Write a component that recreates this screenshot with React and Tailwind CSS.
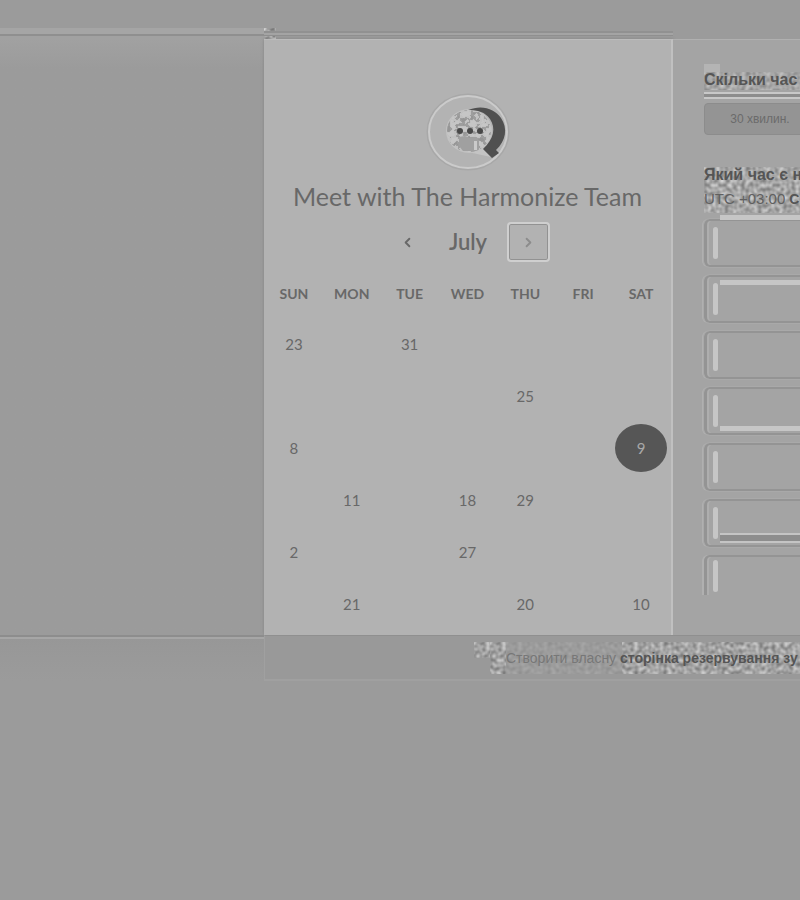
import React from "react";
import { ChevronLeft, ChevronRight } from "lucide-react";

const days = ["SUN", "MON", "TUE", "WED", "THU", "FRI", "SAT"];
const weeks = [
  ["23", "", "31", "", "", "", ""],
  ["", "", "", "", "25", "", ""],
  ["8", "", "", "", "", "", "9"],
  ["", "11", "", "18", "29", "", ""],
  ["2", "", "", "27", "", "", ""],
  ["", "21", "", "", "20", "", "10"],
];
const slots = [
  { bar: "top-[-6px] h-[5px] bg-[#c6c6c6]" },
  { bar: "top-[3px] h-[5px] bg-[#c6c6c6]" },
  { bar: "" },
  { bar: "bottom-[2px] h-[5px] bg-[#c6c6c6]" },
  { bar: "" },
  { bar: "bottom-[2px] h-[10px] border-y-2 border-[#c4c4c4] bg-[#8d8d8d]" },
  { bar: "", last: true },
];

function Grain({ id, className }) {
  return (
    <svg aria-hidden="true" className={"absolute -z-10 " + className}>
      <filter id={id} x="0" y="0" width="100%" height="100%" colorInterpolationFilters="sRGB">
        <feTurbulence type="fractalNoise" baseFrequency="0.24" numOctaves="1" seed="4" />
        <feColorMatrix values="0.8 0 0 0 0.26  0.8 0 0 0 0.26  0.8 0 0 0 0.26  0 0 0 0 1" />
      </filter>
      <rect width="100%" height="100%" filter={"url(#" + id + ")"} />
    </svg>
  );
}

function Logo() {
  return (
    <svg aria-hidden="true" className="h-20 w-[84px]" viewBox="0 0 84 80">
      <defs>
        <filter id="speckle" x="0" y="0" width="100%" height="100%" colorInterpolationFilters="sRGB">
          <feTurbulence type="fractalNoise" baseFrequency="0.2" numOctaves="2" seed="8" />
          <feColorMatrix values="2 0 0 0 -0.4  2 0 0 0 -0.4  2 0 0 0 -0.4  0 0 0 0 1" />
          <feComponentTransfer>
            <feFuncR type="discrete" tableValues="0.59 0.62 0.76 0.78" />
            <feFuncG type="discrete" tableValues="0.59 0.62 0.76 0.78" />
            <feFuncB type="discrete" tableValues="0.59 0.62 0.76 0.78" />
          </feComponentTransfer>
        </filter>
        <clipPath id="bubble"><ellipse cx="43" cy="39" rx="22" ry="21" /></clipPath>
      </defs>
      <ellipse cx="42" cy="40" rx="40" ry="37" fill="#b2b2b2" stroke="#a8a8a8" strokeWidth="3" />
      <ellipse cx="42" cy="40" rx="39" ry="36" fill="#b3b3b3" stroke="#cbcbcb" strokeWidth="2" />
      <path d="M42 60l23 5-5-10z" fill="#c4c4c4" />
      <ellipse cx="43" cy="39" rx="23" ry="22" fill="#c2c2c2" />
      <g clipPath="url(#bubble)">
        <rect x="20" y="17" width="46" height="44" filter="url(#speckle)" />
        <path d="M33 45l6-1 5 2 7-1 2 4v10H37l-4-5z" fill="#a0a0a0" />
        <path d="M48 49h3v9h-3z" fill="#cacaca" />
      </g>
      <path d="M42 18c14-6 27-1 33 8 7 10 5 23-5 32l3 3-7 5-9-9c11-10 13-21 7-30-5-7-12-9-22-9z" fill="#505050" />
      <g fill="#484848">
        <circle cx="34" cy="39" r="3" />
        <circle cx="44" cy="39" r="3" />
        <circle cx="54" cy="39" r="3" />
      </g>
    </svg>
  );
}

function Calendar() {
  return (
    <section className="w-[409px] shrink-0 border-r-2 border-t border-r-[#c0c0c0] border-t-[#bcbcbc] bg-[#b2b2b2] px-px pb-[5px] pt-[52px] font-['Lato',sans-serif] text-[#686868] shadow-[0_0_3px_#858585]">
      <div className="flex justify-center"><Logo /></div>
      <h1 className="mt-1 whitespace-nowrap text-center text-[25px] leading-10">Meet with The Harmonize Team</h1>
      <div className="mt-1.5 flex items-center justify-center pl-2">
        <button aria-label="Previous month" className="flex h-10 w-7 items-center justify-center">
          <ChevronLeft size={15} strokeWidth={3} />
        </button>
        <h2 className="ml-4 mr-2 w-[62px] text-center text-[22px] font-semibold leading-10">July</h2>
        <button aria-label="Next month" className="flex h-10 w-[43px] items-center justify-center rounded border-2 border-[#cfcfcf] text-[#8c8c8c] shadow-[inset_0_0_0_1px_#929292]">
          <ChevronRight size={15} strokeWidth={3} />
        </button>
      </div>
      <table className="mt-2 w-full table-fixed border-collapse text-center">
        <thead>
          <tr className="h-12">
            {days.map((d) => <th key={d} scope="col" className="p-0 text-sm font-bold">{d}</th>)}
          </tr>
        </thead>
        <tbody>
          {weeks.map((week, i) => (
            <tr key={i} className="h-[52px]">
              {week.map((d, j) => (
                <td key={j} className="p-0">
                  {d && (
                    <button className={"h-12 w-[52px] align-middle rounded-[50%] text-[15px] " + (d === "9" ? "bg-[#565656] text-[#a8a8a8]" : "")}>
                      {d}
                    </button>
                  )}
                </td>
              ))}
            </tr>
          ))}
        </tbody>
      </table>
    </section>
  );
}

function Slot({ slot }) {
  return (
    <button
      aria-label="Time slot"
      className={
        "relative flex w-full items-center border-l-[3px] border-[#949494] pl-1.5 shadow-[-2px_0_0_#b0b0b0,inset_2px_0_0_#aeaeae] " +
        (slot.last ? "h-10 rounded-tl-md border-t-2" : "h-12 rounded-l-md border-y-2 outline outline-1 outline-[#a9a9a9]")
      }
    >
      <span className="h-8 w-[5px] rounded-sm bg-[#c6c6c6]" />
      {slot.bar && <span className={"absolute left-[13px] right-0 " + slot.bar} />}
    </button>
  );
}

function Times() {
  return (
    <section className="min-w-0 flex-1 overflow-hidden whitespace-nowrap border-t border-[#b0b0b0] bg-[#a4a4a4] pl-[31px] pt-6 text-[#555555]">
      <div className="relative isolate">
        <Grain id="grain-a" className="left-0 top-2 h-[18px] w-full opacity-50" />
        <div className="absolute left-0 top-0 -z-10 h-2 w-4 bg-[#b4b4b4]" />
        <h2 className="pt-1 text-base font-bold leading-6">Скільки час</h2>
        <div className="h-[7px] border-y-2 border-[#c8c8c8] bg-[#8d8d8d]" />
      </div>
      <button className="mt-1 h-8 w-28 rounded-sm border border-[#8c8c8c] bg-[#949494] text-xs text-[#6b6b6b]">30 хвилин.</button>
      <div className="relative isolate mt-7 pb-1">
        <Grain id="grain-b" className="left-0 top-1 h-[46px] w-full opacity-70" />
        <h2 className="text-base font-bold leading-6">Який час є н</h2>
        <p className="text-sm leading-6"><span className="text-[15px] text-[#606060]">UTC +03:00</span> <b>С</b></p>
      </div>
      <div className="mt-1 grid gap-2">
        {slots.map((s, i) => <Slot key={i} slot={s} />)}
      </div>
    </section>
  );
}

export default function App() {
  return (
    <div className="min-h-screen overflow-hidden bg-[#9b9b9b] font-['Liberation_Sans',Arial,sans-serif]">
      <header className="mt-7 flex h-[11px]">
        <div className="w-[264px] shrink-0">
          <div className="h-[6px] bg-[#a5a5a5]" />
          <div className="h-[2px] bg-[#8f8f8f]" />
          <div className="h-[3px] bg-[#a1a1a1]" />
        </div>
        <div className="relative isolate w-[409px] shrink-0 pt-[3px]">
          <Grain id="grain-c" className="left-0 top-0 h-[11px] w-3" />
          <div className="h-[2px] bg-[#919191]" />
          <div className="h-[2px] bg-[#a4a4a4]" />
          <div className="h-px bg-[#8f8f8f]" />
        </div>
      </header>
      <main className="flex">
        <div className="w-[264px] shrink-0 bg-linear-to-b from-[#a1a1a1] to-[#9b9b9b] to-5%" />
        <Calendar />
        <Times />
      </main>
      <footer className="flex h-[46px]">
        <div className="w-[264px] shrink-0 border-t-2 border-[#8d8d8d] bg-linear-to-b from-[#979797] to-[#9b9b9b]">
          <div className="h-[2px] bg-[#a6a6a6]" />
        </div>
        <div className="min-w-0 flex-1 overflow-hidden whitespace-nowrap border-b-2 border-l border-t border-b-[#a0a0a0] border-l-[#a0a0a0] border-t-[#8f8f8f] bg-[#999999] pl-[241px] pt-2.5 text-sm leading-6 text-[#777777]">
          <div className="relative isolate">
            <Grain id="grain-d" className="-left-4 -top-1 h-8 w-4 opacity-70" />
            <Grain id="grain-g" className="-left-8 -top-1 h-4 w-4 opacity-70" />
            <Grain id="grain-e" className="left-[116px] -top-1 h-8 w-full opacity-70" />
            <Grain id="grain-f" className="left-0 -top-1 h-8 w-[116px] opacity-20" />
            Створити власну <a href="#booking" className="font-bold text-[#555555]">сторінка резервування зу</a>
          </div>
        </div>
      </footer>
    </div>
  );
}
